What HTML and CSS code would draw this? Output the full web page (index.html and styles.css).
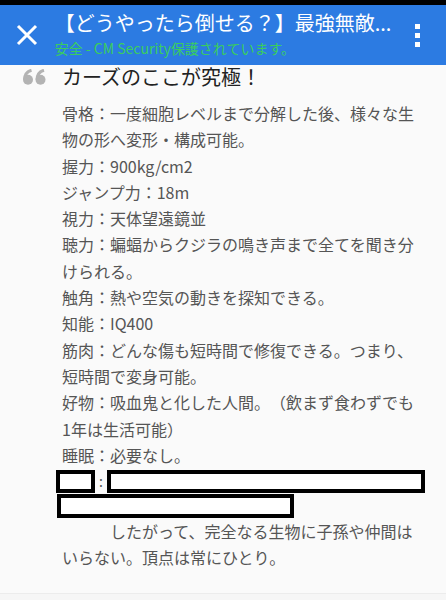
FILE: index.html
```html
<!DOCTYPE html>
<html lang="ja">
<head>
  <meta charset="UTF-8">
  <title>カーズのここが究極！</title>
  <link rel="stylesheet" href="styles.css">
</head>
<body>
  <div class="statusbar"></div>
  <div class="toolbar">
    <div class="close">
      <svg width="22" height="22" viewBox="0 0 22 22">
        <path d="M2 2 L20 20 M20 2 L2 20" stroke="#fff" stroke-width="3" fill="none"/>
      </svg>
    </div>
    <div class="titles">
      <div class="title">【どうやったら倒せる？】最強無敵...</div>
      <div class="secure">安全 - CM Security保護されています。</div>
    </div>
    <div class="menu">
      <span></span><span></span><span></span>
    </div>
  </div>

  <div class="article">
    <h2 class="heading">
      <span class="quote">
        <svg width="23" height="16" viewBox="0 0 23 16">
          <g fill="#b3b3b3">
            <circle cx="5" cy="10.8" r="5"/>
            <circle cx="17.5" cy="10.8" r="5"/>
          </g>
          <g stroke="#b3b3b3" stroke-width="3" fill="none">
            <path d="M1.6 10.5 C1.6 6 4 2.5 8.5 1.2"/>
            <path d="M14.1 10.5 C14.1 6 16.5 2.5 21 1.2"/>
          </g>
        </svg>
      </span>カーズのここが究極！
    </h2>
    <div class="body">
      <p>骨格：一度細胞レベルまで分解した後、様々な生物の形へ変形・構成可能。</p>
      <p>握力：900kg/cm2</p>
      <p>ジャンプ力：18m</p>
      <p>視力：天体望遠鏡並</p>
      <p>聴力：蝙蝠からクジラの鳴き声まで全てを聞き分けられる。</p>
      <p>触角：熱や空気の動きを探知できる。</p>
      <p>知能：IQ400</p>
      <p>筋肉：どんな傷も短時間で修復できる。つまり、短時間で変身可能。</p>
      <p>好物：吸血鬼と化した人間。（飲まず食わずでも1年は生活可能）</p>
      <p>睡眠：必要なし。</p>
      <div class="redact-row">
        <span class="redact r1"></span><span class="colon">:</span><span class="redact r2"></span>
      </div>
      <div class="redact-row">
        <span class="redact r3"></span>
      </div>
      <p class="indent">したがって、完全なる生物に子孫や仲間はいらない。頂点は常にひとり。</p>
    </div>
  </div>
  <div class="footer"></div>
</body>
</html>
```

FILE: styles.css
```css
body {
  margin: 0;
  background-color: #fafafa;
  font-family: "Noto Sans CJK JP", "Noto Sans", sans-serif;
  height: 600px;
  overflow: hidden;
}
.statusbar {
  height: 5px;
  background-color: #000;
}
.toolbar {
  height: 60px;
  background-color: #2c7be2;
  display: flex;
  align-items: center;
}
.close {
  width: 60px;
  padding-left: 16px;
  box-sizing: border-box;
  display: flex;
  align-items: center;
}
.titles {
  flex: 1;
  display: flex;
  flex-direction: column;
  margin-left: -5px;
  margin-top: -3px;
}
.title {
  color: #fff;
  font-size: 20px;
  line-height: 24px;
  white-space: nowrap;
}
.secure {
  color: #3acd5e;
  font-size: 14px;
  line-height: 18px;
  margin-top: 4px;
  white-space: nowrap;
}
.menu {
  width: 52px;
  display: flex;
  flex-direction: column;
  align-items: center;
  gap: 4px;
  padding-right: 3px;
}
.menu span {
  width: 5px;
  height: 5px;
  background-color: #fff;
}
.article {
  padding-left: 62px;
  padding-bottom: 22px;
}
.heading {
  margin: 0 0 0 -62px;
  font-size: 20px;
  font-weight: normal;
  line-height: 24px;
  color: #222;
  display: flex;
}
.quote {
  width: 62px;
  padding-left: 23px;
  padding-top: 4px;
  box-sizing: border-box;
  height: 24px;
}
.quote svg {
  display: block;
}
.body {
  width: 354px;
  margin-top: 11px;
  color: #555;
  font-size: 16px;
  line-height: 26.3px;
  text-spacing-trim: space-all;
}
.body p {
  margin: 0;
}
.redact-row {
  display: flex;
  align-items: center;
  margin-left: -6px;
  height: 24px;
}
.redact-row:first-of-type {
  height: 26px;
}
.redact {
  display: block;
  flex-shrink: 0;
  border: 4px solid #000;
  background-color: #fff;
  box-sizing: border-box;
}
.r1 {
  width: 39px;
  height: 23px;
}
.r2 {
  width: 318px;
  height: 23px;
}
.r3 {
  width: 237px;
  height: 24px;
  margin-left: 1px;
}
.colon {
  width: 12px;
  flex-shrink: 0;
  text-align: center;
  font-size: 14px;
  line-height: 20px;
}
.indent {
  text-indent: 3em;
}
.footer {
  border-top: 1px solid #ececec;
  height: 10px;
  background-color: #f6f6f6;
}
```
